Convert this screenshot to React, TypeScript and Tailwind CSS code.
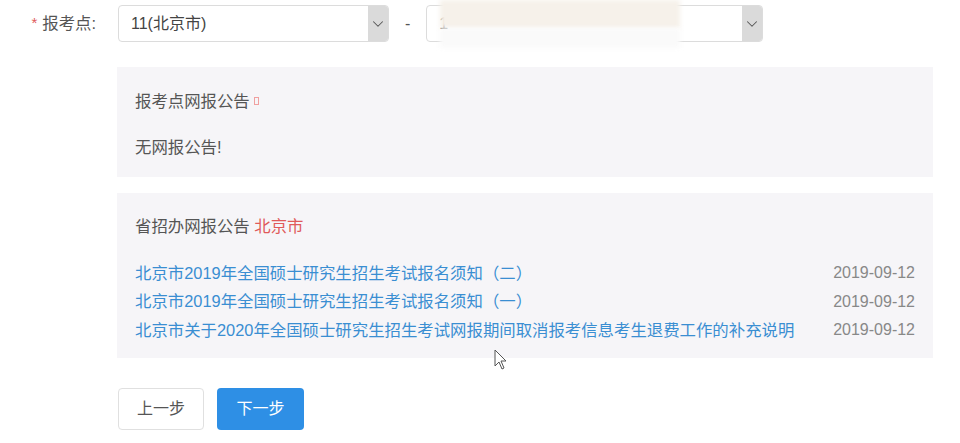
import { ChevronDown } from "lucide-react";

const notices = [
  { title: "北京市2019年全国硕士研究生招生考试报名须知（二）", date: "2019-09-12" },
  { title: "北京市2019年全国硕士研究生招生考试报名须知（一）", date: "2019-09-12" },
  {
    title: "北京市关于2020年全国硕士研究生招生考试网报期间取消报考信息考生退费工作的补充说明",
    date: "2019-09-12",
  },
];

function Select({ value, width }: { value: string; width: string }) {
  return (
    <div className={`flex h-[37px] ${width} overflow-hidden rounded-[4px] border border-[#dcdcdc] bg-white`}>
      <div className="flex flex-1 items-center pl-3 text-[16px] text-[#444]">{value}</div>
      <div className="flex w-[20px] items-center justify-center bg-[#dadada] text-[#555]">
        <ChevronDown size={18} strokeWidth={1.4} />
      </div>
    </div>
  );
}

export default function App() {
  return (
    <div
      className="relative h-[443px] w-[960px] overflow-hidden bg-white"
      style={{ fontFamily: '"Liberation Sans", "Noto Sans CJK SC", sans-serif' }}
    >
      <div className="flex items-center pt-[5px]">
        <div className="flex w-[96px] items-center justify-end text-[16.4px] text-[#555]">
          <span className="mr-[5px] text-[15px] text-[#e05a5a]">*</span>报考点:
        </div>
        <div className="ml-[22px]">
          <Select value="11(北京市)" width="w-[271px]" />
        </div>
        <span className="mx-[16px] text-[16px] text-[#555]">-</span>
        <Select value="1" width="w-[337px]" />
      </div>

      <div className="ml-[117px] mt-[25px] w-[816px] bg-[#f6f5f8] px-[18px] pb-[18px] pt-[22px] text-[16.4px] text-[#555]">
        <div className="flex items-center">
          报考点网报公告
          <span className="ml-[4px] h-[8px] w-[5px] border border-[#f0a0a0]" />
        </div>
        <div className="mt-[21px]">无网报公告!</div>
      </div>

      <div className="ml-[117px] mt-[16px] w-[816px] bg-[#f6f5f8] px-[18px] pb-[14px] pt-[21px] text-[16.4px]">
        <div className="text-[#555]">
          省招办网报公告 <span className="text-[#e05a5a]">北京市</span>
        </div>
        <div className="mt-[20px] flex flex-col">
          {notices.map((n) => (
            <div key={n.title} className="flex h-[28.5px] items-center justify-between">
              <span className="text-[#3a8ed2]">{n.title}</span>
              <span className="text-[16px] text-[#888]">{n.date}</span>
            </div>
          ))}
        </div>
      </div>

      <div className="ml-[118px] mt-[30px] flex gap-[13px]">
        <button className="h-[42px] w-[86px] rounded-[4px] border border-[#e0e0e0] bg-white text-[16px] text-[#555]">
          上一步
        </button>
        <button className="h-[42px] w-[87px] rounded-[4px] bg-[#2e8fe5] text-[16px] text-white">下一步</button>
      </div>

      <div className="absolute left-[440px] top-0 h-[28px] w-[240px] bg-[#f6f1ea] blur-[2px]" />
      <div className="absolute left-[440px] top-[28px] h-[20px] w-[240px] bg-[#fafafa] blur-[2px]" />

      <svg className="absolute left-[494px] top-[349px]" width="14" height="22" viewBox="0 0 14 22">
        <path d="M1 1 L1 17 L5 13 L8 20 L10 19 L7 12 L12 12 Z" fill="white" stroke="#555" strokeWidth="1" />
      </svg>
    </div>
  );
}
